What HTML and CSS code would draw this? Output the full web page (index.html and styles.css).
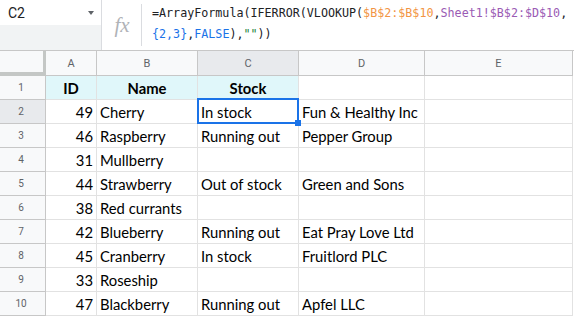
FILE: index.html
```html
<!DOCTYPE html>
<html>
  <head>
    <title>Stock lookup</title>
    <link rel="stylesheet" href="styles.css">
  </head>
  <body>
    <div class="formula-bar">
      <div class="name-box">
        <div class="name-box-top">
          <span class="cell-ref">C2</span>
          <span class="caret"></span>
        </div>
        <div class="name-box-bottom"></div>
      </div>
      <div class="fx-box">
        <span class="fx">fx</span>
      </div>
      <div class="formula">
        <div>=ArrayFormula(IFERROR(VLOOKUP(<span class="ref-orange">$B$2:$B$10</span>,<span class="ref-purple">Sheet1!$B$2:$D$10</span>,</div>
        <div><span class="num">{2,3}</span>,<span class="num">FALSE</span>),<span class="str">""</span>))</div>
      </div>
    </div>

    <div class="sheet">
      <div class="corner"></div>
      <div class="col-head">A</div>
      <div class="col-head">B</div>
      <div class="col-head selected">C</div>
      <div class="col-head">D</div>
      <div class="col-head">E</div>

      <div class="row-head">1</div>
      <div class="cell title center">ID</div>
      <div class="cell title center">Name</div>
      <div class="cell title center">Stock</div>
      <div class="cell"></div>
      <div class="cell"></div>

      <div class="row-head selected">2</div>
      <div class="cell right">49</div>
      <div class="cell">Cherry</div>
      <div class="cell active">In stock</div>
      <div class="cell">Fun &amp; Healthy Inc</div>
      <div class="cell"></div>

      <div class="row-head">3</div>
      <div class="cell right">46</div>
      <div class="cell">Raspberry</div>
      <div class="cell">Running out</div>
      <div class="cell">Pepper Group</div>
      <div class="cell"></div>

      <div class="row-head">4</div>
      <div class="cell right">31</div>
      <div class="cell">Mullberry</div>
      <div class="cell"></div>
      <div class="cell"></div>
      <div class="cell"></div>

      <div class="row-head">5</div>
      <div class="cell right">44</div>
      <div class="cell">Strawberry</div>
      <div class="cell">Out of stock</div>
      <div class="cell">Green and Sons</div>
      <div class="cell"></div>

      <div class="row-head">6</div>
      <div class="cell right">38</div>
      <div class="cell">Red currants</div>
      <div class="cell"></div>
      <div class="cell"></div>
      <div class="cell"></div>

      <div class="row-head">7</div>
      <div class="cell right">42</div>
      <div class="cell">Blueberry</div>
      <div class="cell">Running out</div>
      <div class="cell">Eat Pray Love Ltd</div>
      <div class="cell"></div>

      <div class="row-head">8</div>
      <div class="cell right">45</div>
      <div class="cell">Cranberry</div>
      <div class="cell">In stock</div>
      <div class="cell">Fruitlord PLC</div>
      <div class="cell"></div>

      <div class="row-head">9</div>
      <div class="cell right">33</div>
      <div class="cell">Roseship</div>
      <div class="cell"></div>
      <div class="cell"></div>
      <div class="cell"></div>

      <div class="row-head">10</div>
      <div class="cell right">47</div>
      <div class="cell">Blackberry</div>
      <div class="cell">Running out</div>
      <div class="cell">Apfel LLC</div>
      <div class="cell"></div>
    </div>
  </body>
</html>
```

FILE: styles.css
```css
body {
  margin: 0;
  background: #fff;
  font-family: Roboto, "Liberation Sans", sans-serif;
  overflow: hidden;
}

/* formula bar */
.formula-bar {
  display: flex;
  height: 50px;
  border-bottom: 1px solid #c7c7c7;
}

.name-box {
  width: 101px;
  border-right: 1px solid #dadce0;
  display: flex;
  flex-direction: column;
}

.name-box-top {
  height: 25px;
  display: flex;
  align-items: center;
  justify-content: space-between;
  padding: 0 7px 0 8px;
  background: #fff;
}

.cell-ref {
  font-size: 14px;
  color: #202124;
}

.caret {
  width: 0;
  height: 0;
  border-left: 3px solid transparent;
  border-right: 3px solid transparent;
  border-top: 4px solid #5f6368;
}

.name-box-bottom {
  flex: 1;
  background: #f1f3f4;
}

.fx-box {
  width: 40px;
  display: flex;
  align-items: center;
  justify-content: center;
  position: relative;
}

.fx-box::after {
  content: "";
  position: absolute;
  right: 0;
  top: 4px;
  bottom: 4px;
  border-right: 1px solid #dadce0;
}

.fx {
  font-family: "Liberation Serif", serif;
  font-style: italic;
  font-size: 21px;
  color: #b0b3b8;
  margin-top: 1px;
}

.formula {
  padding: 3px 0 0 10px;
  font-family: "DejaVu Sans Mono", "Liberation Mono", monospace;
  font-size: 11.7px;
  line-height: 21px;
  color: #202124;
  white-space: nowrap;
}

.ref-orange { color: #f29544; }
.ref-purple { color: #9a5bb4; }
.num { color: #1a73e8; }
.str { color: #188038; }

/* grid */
.sheet {
  display: grid;
  grid-template-columns: 46px 51px 101px 101px 126px 148px;
  grid-template-rows: 25px repeat(10, 24px);
}

.corner {
  background: #f8f9fa;
  border-right: 4px solid #c4c7c5;
  border-bottom: 4px solid #c4c7c5;
  margin-right: -1px;
}

.col-head {
  background: #f8f9fa;
  border-right: 1px solid #c7c7c7;
  border-bottom: 1px solid #c7c7c7;
  display: flex;
  align-items: center;
  justify-content: center;
  font-size: 11px;
  color: #5f6368;
}

.row-head {
  background: #f8f9fa;
  border-right: 1px solid #c7c7c7;
  border-bottom: 1px solid #c7c7c7;
  display: flex;
  align-items: center;
  justify-content: center;
  padding-right: 3px;
  font-size: 10px;
  color: #5f6368;
}

.selected {
  background: #e8eaed;
}

.cell {
  border-right: 1px solid #e2e2e2;
  border-bottom: 1px solid #e2e2e2;
  display: flex;
  align-items: center;
  padding: 1px 3px 0 3px;
  font-family: Lato, "Open Sans", sans-serif;
  font-size: 14.8px;
  color: #000;
  white-space: nowrap;
}

.title {
  background: #e0f7fa;
  font-weight: bold;
}

.center { justify-content: center; }
.right { justify-content: flex-end; }

.active {
  position: relative;
}

.active::before {
  content: "";
  position: absolute;
  top: -2px;
  left: -1px;
  right: -1px;
  bottom: -1px;
  border: 2px solid #1a73e8;
  z-index: 1;
}

.active::after {
  content: "";
  position: absolute;
  right: -3px;
  bottom: -3px;
  width: 6px;
  height: 6px;
  background: #1a73e8;
  z-index: 2;
}
```
